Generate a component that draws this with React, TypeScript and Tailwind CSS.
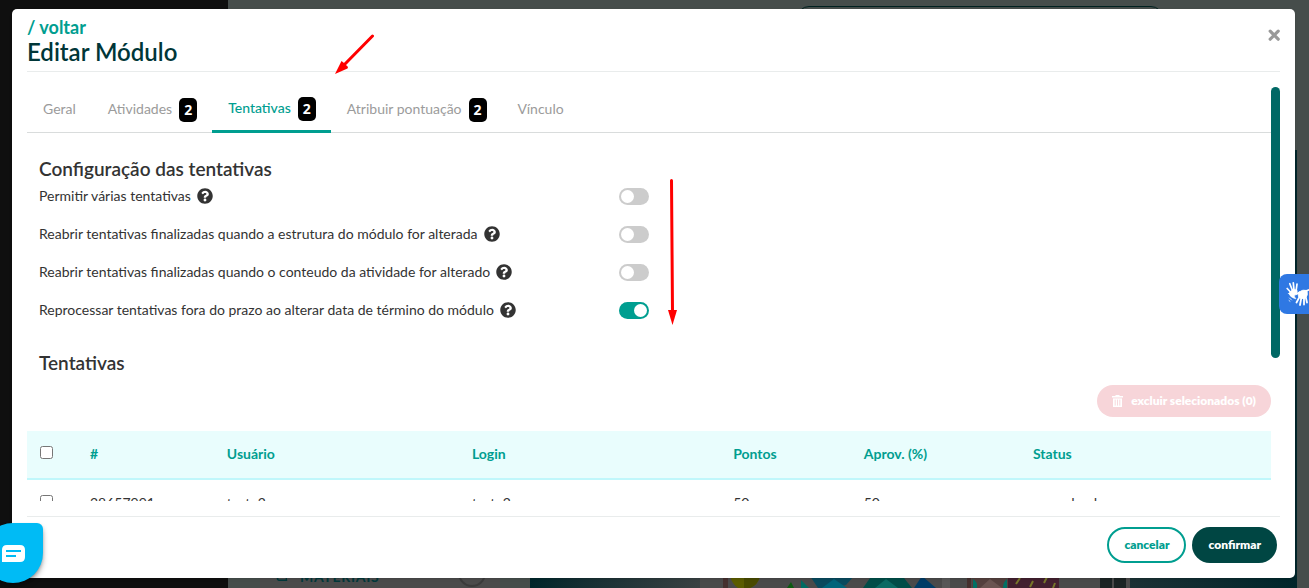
import { useState } from "react";
import type { ReactNode } from "react";
import clsx from "clsx";
import { FaBook, FaPlay, FaQuestionCircle } from "react-icons/fa";

const tabs = [
  { name: "Geral" },
  { name: "Atividades", count: 2 },
  { name: "Tentativas", count: 2 },
  { name: "Atribuir pontuação", count: 2 },
  { name: "Vínculo" },
];

const settings = [
  { id: "multiple", label: "Permitir várias tentativas", on: false },
  { id: "structure", label: "Reabrir tentativas finalizadas quando a estrutura do módulo for alterada", on: false },
  { id: "content", label: "Reabrir tentativas finalizadas quando o conteudo da atividade for alterado", on: false },
  { id: "deadline", label: "Reprocessar tentativas fora do prazo ao alterar data de término do módulo", on: true },
];

const columns = [
  { name: "#", width: "w-[11%]" },
  { name: "Usuário", width: "w-[19.7%]" },
  { name: "Login", width: "w-[21%]" },
  { name: "Pontos", width: "w-[10.5%]" },
  { name: "Aprov. (%)", width: "w-[13.6%]" },
  { name: "Status", width: "" },
];

const attempts = [["28657991", "teste2", "teste2", "50", "50", "aguardando"]];

function Banner() {
  return (
    <div className="flex flex-1 items-end bg-linear-to-r from-[#00262b] via-[#4a4a4a] via-30% to-[#00262b]">
      <svg className="h-3 w-full" viewBox="0 0 767 12" preserveAspectRatio="none" aria-hidden="true">
        <rect x="170" width="430" height="12" fill="#4a4a4a" />
        <rect x="193" width="5" height="12" fill="#45302e" />
        <path d="M200 0h30q-2 9-10 12h-12q-6-4-8-12z" fill="#5b5c00" />
        <path d="M214 0h16q-2 9-10 12h-6z" fill="#484a00" />
        <path d="M257 12l4-6 3 6z" fill="#0c5a10" />
        <path d="M271 4l8 8h-8z" fill="#006b62" />
        <path d="M280 0h44l-8 9-12 3h-16z" fill="#0a4a5e" />
        <path d="M292 12l12-9 13 9z" fill="#00647a" />
        <path d="M333 12l7-10h34l8 10z" fill="#004d48" />
        <path d="M345 12l11-9 12 9z" fill="#0a6a63" />
        <path d="M384 12l8-12 14 12z" fill="#003c66" />
        <path d="M412 0h8v12h-8z" fill="#575757" />
        <rect x="437" width="4" height="12" fill="#45302e" />
        <rect x="442" width="36" height="12" fill="#54403e" />
        <path d="M450 12l10-9 12 9z" fill="#6a5451" />
        <path d="M443 3q5 3 4 9h-4zM477 3q-4 3-4 9h4z" fill="#007064" />
        <rect x="478" width="51" height="12" fill="#43202f" />
        <path d="M486 8l4-6M500 11l3-6M514 7l3-6M523 12l2-5" stroke="#77762a" strokeWidth="2" />
        <rect x="570" width="12" height="12" fill="#1b2424" />
        <rect x="584" width="12" height="12" fill="#1b2424" />
      </svg>
    </div>
  );
}

function Backdrop() {
  return (
    <div className="flex h-full" aria-hidden="true">
      <aside className="w-[228px] shrink-0 bg-[#0f0f0f]" />
      <main className="flex min-w-0 flex-1 flex-col bg-[#464d4b] pt-1.5">
        <div className="ml-[43%] flex h-36 w-1/2 items-start pl-[104px]">
          <div className="h-9 w-[366px] rounded-xl border border-[#00201f]" />
        </div>
        <div className="flex flex-1 pr-3">
          <div className="flex w-[302px] shrink-0 items-end pr-[30px] pl-8">
            <div className="flex w-full flex-1 items-end gap-3 bg-[#4b4b4b] pr-3.5 pb-px pl-4 text-[#00383a]">
              <FaBook className="mb-1.5 size-3" />
              <span className="flex-1 text-sm font-bold tracking-wider">MATERIAIS</span>
              <span className="flex size-7 items-center justify-center rounded-full border-2 border-[#3b3b3b]">
                <FaPlay className="size-2" />
              </span>
            </div>
          </div>
          <Banner />
        </div>
      </main>
    </div>
  );
}

function Count({ children }: { children: ReactNode }) {
  return (
    <span className="flex h-6 w-[18px] items-center justify-center rounded-[5px] bg-black font-['Open_Sans',sans-serif] text-sm font-bold text-white">
      {children}
    </span>
  );
}

function Tabs() {
  const [active, setActive] = useState("Tentativas");

  return (
    <nav className="flex h-[46px] border-b border-[#d9dcdc]">
      {tabs.map((tab) => (
        <button
          key={tab.name}
          onClick={() => setActive(tab.name)}
          className={clsx(
            "-mb-px flex items-center gap-1.5 px-[15px] text-[14px]",
            active === tab.name ? "border-b-[3px] border-[#009e90] font-medium text-[#009e90]" : "text-[#9b9b9b]"
          )}
        >
          <span className="px-px pb-[3px]">{tab.name}</span>
          {tab.count && <Count>{tab.count}</Count>}
        </button>
      ))}
    </nav>
  );
}

function Setting({ id, label, on }: { id: string; label: string; on: boolean }) {
  return (
    <div className="flex h-[38px] items-start">
      <div className="flex w-[580px] items-center gap-1.5 text-[14px] leading-5">
        <label htmlFor={id}>{label}</label>
        <FaQuestionCircle className="size-4" />
      </div>
      <input
        id={id}
        type="checkbox"
        defaultChecked={on}
        className="mt-0.5 flex h-[17px] w-[30px] cursor-pointer appearance-none items-center rounded-full bg-[#ccc] px-0.5 before:size-[13px] before:rounded-full before:bg-white checked:justify-end checked:bg-[#009e90]"
      />
    </div>
  );
}

function TrashIcon() {
  return (
    <svg className="h-3 w-[11px]" viewBox="0 0 11 12" fill="none" aria-hidden="true">
      <path d="M0 1h3.5V0h4v1H11v1.6H0z" fill="currentColor" />
      <path d="M1 3.4h9V12H1z" fill="currentColor" />
      <path d="M3.2 4.6v6M5.5 4.6v6M7.8 4.6v6" stroke="#f7d5d9" strokeWidth="0.9" />
    </svg>
  );
}

function AttemptsTable() {
  return (
    <table className="w-full table-fixed text-left text-[14px]">
      <thead>
        <tr className="h-12 border-b-2 border-[#c0f7fb] bg-[#e9fdfd] text-[#009e90]">
          <th className="w-[4.1%] pb-1 pl-[13px]">
            <input type="checkbox" aria-label="Selecionar todos" className="block size-[13px]" />
          </th>
          {columns.map((col) => (
            <th key={col.name} className={clsx("pb-0.5 pl-3 font-bold", col.width)}>
              {col.name}
            </th>
          ))}
        </tr>
      </thead>
      <tbody>
        {attempts.map((row) => (
          <tr key={row[0]} className="h-[46px]">
            <td className="pb-0.5 pl-[13px]">
              <input type="checkbox" aria-label={row[0]} className="block size-[13px]" />
            </td>
            {row.map((cell, i) => (
              <td key={i} className="pl-3">
                {cell}
              </td>
            ))}
          </tr>
        ))}
      </tbody>
    </table>
  );
}

function EditModal() {
  return (
    <div role="dialog" aria-label="Editar Módulo" className="flex h-full flex-col rounded-[5px] bg-white px-[15px] shadow-sm">
      <header className="flex items-start justify-between border-b border-[#e9ecec] pt-2 pb-[5px]">
        <div>
          <a href="#" className="block text-[18px] leading-[21px] font-bold text-[#009e90]">
            / voltar
          </a>
          <h1 className="text-[24px] leading-7 font-semibold text-[#003638]">Editar Módulo</h1>
        </div>
        <button aria-label="Fechar" className="mt-3 text-[#999]">
          <svg className="size-3" viewBox="0 0 12 12" stroke="currentColor" strokeWidth="3.2" strokeLinecap="round" aria-hidden="true">
            <path d="M2.2 2.2l8 8M10.200 2.200l-8 8" />
          </svg>
        </button>
      </header>

      <div className="mt-[15px] flex min-h-0 flex-1">
        <div className="min-w-0 flex-1 overflow-hidden text-[#333]">
          <Tabs />
          <section className="px-3 pt-[23px]">
            <h2 className="pb-1 text-[19px] leading-[26px] font-semibold">Configuração das tentativas</h2>
            {settings.map((s) => (
              <Setting key={s.id} {...s} />
            ))}
            <h2 className="pt-3 text-[19px] leading-[26px] font-semibold">Tentativas</h2>
          </section>
          <div className="flex justify-end pt-[9px] pb-3.5">
            <button className="flex h-8 items-center gap-2 rounded-full bg-[#f7d5d9] px-[15px] text-[12px] font-extrabold text-white">
              <TrashIcon />
              excluir selecionados (0)
            </button>
          </div>
          <AttemptsTable />
        </div>
        <div className="h-[65.5%] w-[9px] rounded-full bg-[#006865]" />
      </div>

      <footer className="mt-[15px] flex justify-end gap-1.5 border-t border-[#e9ecec] pt-2.5 pr-[3px] pb-[15px] text-[12px] font-extrabold">
        <button className="h-9 rounded-full border-2 border-[#009e90] px-[15px] text-[#009e90]">cancelar</button>
        <button className="h-9 rounded-full bg-[#004643] px-4 text-white">confirmar</button>
      </footer>
    </div>
  );
}

function SignLanguageButton() {
  return (
    <button
      aria-label="Acessibilidade em Libras"
      className="absolute top-[274px] right-0 flex h-10 w-[30px] items-center justify-end rounded-l-lg bg-[#2f78e3] text-white"
    >
      <svg className="h-[26px] w-[23px]" viewBox="0 0 23 26" fill="none" stroke="currentColor" strokeLinecap="round" aria-hidden="true">
        <path d="M1.200 7.500L5 11.500M3.800 2.700L6.500 9.500M7.300 1.800L8 9M11 3.200L10 10.500" strokeWidth="1.700" />
        <path d="M2.500 12.500q2-2 4.500-4.500l4 1q1 3-1 4-3 2 0 5-5-1-7.500-5.500z" fill="currentColor" strokeWidth="0.500" />
        <path d="M13 11q4-3 8-1.500 1.500 5-2 8-5 1-6.500-2-1-3 .5-4.500z" fill="currentColor" strokeWidth="0.800" />
        <path d="M14 15l-3.500 6.500M15.500 16l-1.500 8M18 16v7.500M19.500 15l1.500 6.500M13.500 11.500L10 13.200M20 10l2.500-1" strokeWidth="1.800" />
        <path d="M3.500 17l2 2M3 19.500l1 .8" strokeWidth="0.800" />
      </svg>
    </button>
  );
}

function ChatButton() {
  return (
    <button
      aria-label="Chat"
      className="absolute bottom-[5px] -left-[17px] flex size-[60px] items-center justify-center rounded-[30px] rounded-tr-md bg-[#00bbf5] shadow-md shadow-black/40"
    >
      <svg className="h-[17px] w-[23px]" viewBox="0 0 23 17" aria-hidden="true">
        <path d="M5 0h13q5 0 5 5v7q0 5-5 5H0V5q0-5 5-5z" fill="#fff" />
        <path d="M4 6h15M4 11h10" stroke="#00bbf5" strokeWidth="2" />
      </svg>
    </button>
  );
}

function Arrows() {
  return (
    <>
      <svg className="pointer-events-none absolute top-[34px] left-[334px] h-[41px] w-[41px]" viewBox="0 0 41 41" aria-hidden="true">
        <path d="M38.500 2L10 31" stroke="#f00" strokeWidth="3" strokeLinecap="round" />
        <path d="M1 40l6.500-13 2.500 2 4 4-.5 1.500z" fill="#f00" />
      </svg>
      <svg className="pointer-events-none absolute top-[179px] left-[667px] h-[146px] w-[11px]" viewBox="0 0 11 146" aria-hidden="true">
        <path d="M4.500 1.500L5.500 133" stroke="#f00" strokeWidth="3" strokeLinecap="round" />
        <path d="M1 131h9l-4.500 15z" fill="#f00" />
      </svg>
    </>
  );
}

export default function App() {
  return (
    <div className="relative h-screen overflow-hidden font-[Lato,sans-serif]">
      <Backdrop />
      <div className="absolute inset-0 pt-[9px] pr-3.5 pb-2.5 pl-3">
        <EditModal />
      </div>
      <Arrows />
      <SignLanguageButton />
      <ChatButton />
    </div>
  );
}
